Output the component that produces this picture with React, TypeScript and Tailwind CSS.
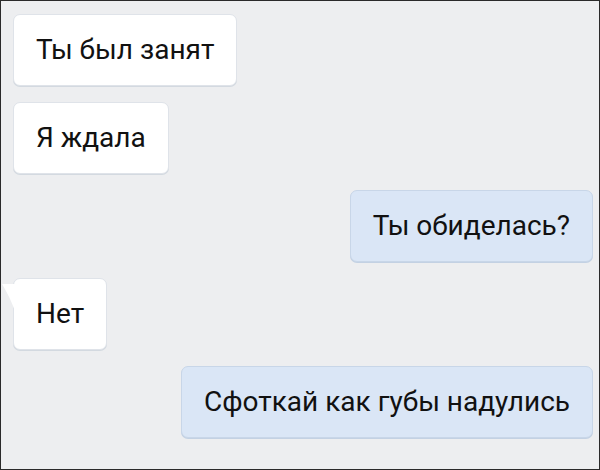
const incoming = "bg-white border border-[#dfe3e9] shadow-[0_1px_0_#d3d9e0]";
const outgoing = "bg-[#dae6f6] border border-[#c8d6e8] shadow-[0_1px_0_#c3d1e3]";

const Bubble = ({ text, out, tail }: { text: string; out?: boolean; tail?: boolean }) => (
  <div className={out ? "flex justify-end" : "flex justify-start"}>
    <div
      className={`relative h-[72px] flex items-center px-[22px] rounded-[7px] text-[28px] leading-none text-[#111] ${
        out ? outgoing : incoming
      }`}
    >
      {tail && (
        <svg className="absolute left-[-12px] top-[5px]" width="14" height="30" viewBox="0 0 14 30">
          <path d="M0 0 L14 0 L14 30 C10 18 5 8 0 0 Z" fill="#ffffff" />
        </svg>
      )}
      <span>{text}</span>
    </div>
  </div>
);

export default function App() {
  return (
    <div
      className="w-[600px] h-[470px] bg-[#edeef0] border border-[#2a2a2a] overflow-hidden"
      style={{ fontFamily: "Roboto, 'Liberation Sans', sans-serif" }}
    >
      <div className="flex flex-col gap-4 pl-3 pr-[6px] pt-[13px]">
        <Bubble text="Ты был занят" />
        <Bubble text="Я ждала" />
        <Bubble text="Ты обиделась?" out />
        <Bubble text="Нет" tail />
        <Bubble text="Сфоткай как губы надулись" out />
      </div>
    </div>
  );
}
